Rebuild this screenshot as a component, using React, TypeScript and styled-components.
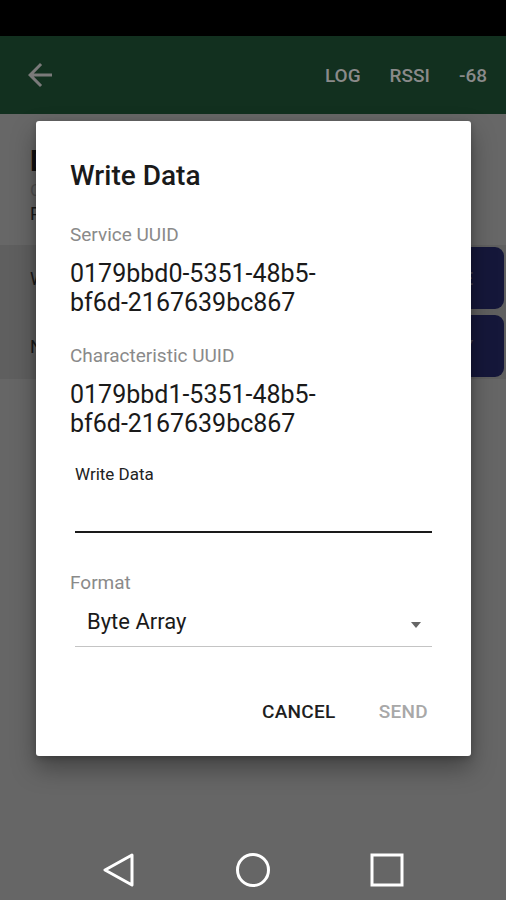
import React from "react";
import styled, { createGlobalStyle } from "styled-components";

const GlobalStyle = createGlobalStyle`
  html, body {
    margin: 0;
    padding: 0;
    background: #666666;
  }
  body {
    font-family: Roboto, "Noto Sans", "Liberation Sans", sans-serif;
  }
`;

const Phone = styled.div`
  width: 506px;
  height: 900px;
  display: flex;
  flex-direction: column;
  overflow: hidden;
`;

const StatusBar = styled.div`
  height: 36px;
  background: #000;
  flex-shrink: 0;
`;

const Screen = styled.div`
  position: relative;
  flex: 1;
  background: #666666;
  display: flex;
  flex-direction: column;
`;

const Toolbar = styled.div`
  height: 78px;
  background: #12301f;
  display: flex;
  align-items: center;
  padding: 0 19px 0 22px;
`;

const BackIcon = styled.svg`
  width: 36px;
  height: 36px;
  fill: #7a7a7a;
`;

const Actions = styled.div`
  margin-left: auto;
  display: flex;
  gap: 29px;
`;

const Action = styled.span`
  font-size: 19px;
  font-weight: 500;
  color: #8a8a8a;
`;

const Header = styled.div`
  height: 131px;
  padding: 30px 0 0 30px;
  box-sizing: border-box;
  background: #676767;
  overflow: hidden;
`;

const HeaderTitle = styled.div`
  font-size: 29px;
  font-weight: 700;
  line-height: 34px;
  color: #121212;
`;

const HeaderLine = styled.div<{ muted?: boolean }>`
  font-size: ${(p) => (p.muted ? "17px" : "18px")};
  line-height: 24px;
  color: ${(p) => (p.muted ? "#505050" : "#1a1a1a")};
`;

const Band = styled.div`
  background: #5f5f5f;
  padding: 2px 0;
  display: flex;
  flex-direction: column;
  gap: 6px;
`;

const Row = styled.div`
  height: 62px;
  display: flex;
  align-items: center;
  padding: 0 2px 0 30px;
`;

const RowLabel = styled.span`
  font-size: 18px;
  color: #1a1a1a;
`;

const RowButton = styled.div`
  margin-left: auto;
  width: 90px;
  height: 62px;
  border-radius: 9px;
  background: #15173a;
  color: #4a4a5a;
  font-size: 19px;
  font-weight: 500;
  display: flex;
  align-items: center;
  justify-content: flex-end;
  padding-right: 31px;
  box-sizing: border-box;
`;

const Dialog = styled.div`
  position: absolute;
  top: 85px;
  left: 36px;
  width: 435px;
  box-sizing: border-box;
  padding: 39px 39px 32px 34px;
  background: #fff;
  border-radius: 3px;
  box-shadow: 0 12px 24px rgba(0, 0, 0, 0.35), 0 2px 6px rgba(0, 0, 0, 0.2);
`;

const DialogTitle = styled.div`
  font-size: 28px;
  font-weight: 500;
  line-height: 32px;
  color: #1a1a1a;
`;

const Field = styled.div<{ first?: boolean }>`
  margin-top: ${(p) => (p.first ? "31px" : "27px")};
`;

const FieldLabel = styled.div`
  font-size: 19px;
  line-height: 24px;
  color: #8a8a8a;
`;

const FieldValue = styled.div`
  margin-top: 12px;
  font-size: 25px;
  line-height: 29px;
  color: #1a1a1a;
`;

const TextField = styled.div`
  margin: 26px 0 0 5px;
  border-bottom: 2px solid #1a1a1a;
  height: 67px;
`;

const TextFieldLabel = styled.div`
  font-size: 17px;
  line-height: 20px;
  color: #222;
`;

const FormatLabel = styled(FieldLabel)`
  margin-top: 38px;
`;

const Select = styled.div`
  margin: 13px 0 0 5px;
  padding: 0 11px 10px 12px;
  border-bottom: 1px solid #c4c4c4;
  display: flex;
  align-items: center;
`;

const SelectText = styled.span`
  font-size: 22px;
  line-height: 28px;
  color: #1a1a1a;
`;

const Caret = styled.span`
  margin-left: auto;
  margin-top: 6px;
  width: 0;
  height: 0;
  border-left: 5px solid transparent;
  border-right: 5px solid transparent;
  border-top: 6px solid #666;
`;

const ButtonRow = styled.div`
  margin-top: 53px;
  display: flex;
  justify-content: flex-end;
  gap: 43px;
  padding-right: 4px;
`;

const TextButton = styled.span<{ disabled?: boolean }>`
  font-size: 19px;
  font-weight: 500;
  line-height: 24px;
  letter-spacing: 0.3px;
  color: ${(p) => (p.disabled ? "#a8a8a8" : "#1e1e1e")};
`;

const NavBar = styled.div`
  height: 60px;
  flex-shrink: 0;
  background: #666666;
  display: flex;
  align-items: center;
  justify-content: center;
  gap: 100px;
`;

const NavIcon = styled.svg`
  width: 34px;
  height: 34px;
  fill: none;
  stroke: #fff;
  stroke-width: 3;
`;

export default function App() {
  return (
    <>
      <GlobalStyle />
      <Phone>
        <StatusBar />
        <Screen>
          <Toolbar>
            <BackIcon viewBox="0 0 24 24">
              <path d="M20 11H7.83l5.59-5.59L12 4l-8 8 8 8 1.41-1.41L7.83 13H20v-2z" />
            </BackIcon>
            <Actions>
              <Action>LOG</Action>
              <Action>RSSI</Action>
              <Action>-68</Action>
            </Actions>
          </Toolbar>
          <Header>
            <HeaderTitle>Device</HeaderTitle>
            <HeaderLine muted>Connected</HeaderLine>
            <HeaderLine>Properties</HeaderLine>
          </Header>
          <Band>
            <Row>
              <RowLabel>Write</RowLabel>
              <RowButton>WRITE</RowButton>
            </Row>
            <Row>
              <RowLabel>Notify</RowLabel>
              <RowButton>NOTIFY</RowButton>
            </Row>
          </Band>

          <Dialog>
            <DialogTitle>Write Data</DialogTitle>
            <Field first>
              <FieldLabel>Service UUID</FieldLabel>
              <FieldValue>
                0179bbd0-5351-48b5-
                <br />
                bf6d-2167639bc867
              </FieldValue>
            </Field>
            <Field>
              <FieldLabel>Characteristic UUID</FieldLabel>
              <FieldValue>
                0179bbd1-5351-48b5-
                <br />
                bf6d-2167639bc867
              </FieldValue>
            </Field>
            <TextField>
              <TextFieldLabel>Write Data</TextFieldLabel>
            </TextField>
            <FormatLabel>Format</FormatLabel>
            <Select>
              <SelectText>Byte Array</SelectText>
              <Caret />
            </Select>
            <ButtonRow>
              <TextButton>CANCEL</TextButton>
              <TextButton disabled>SEND</TextButton>
            </ButtonRow>
          </Dialog>
        </Screen>
        <NavBar>
          <NavIcon viewBox="0 0 34 34">
            <path d="M30 2 L3 17 L30 32 Z" strokeLinejoin="round" />
          </NavIcon>
          <NavIcon viewBox="0 0 34 34">
            <circle cx="17" cy="17" r="15.5" />
          </NavIcon>
          <NavIcon viewBox="0 0 34 34">
            <rect x="2" y="2" width="30" height="30" />
          </NavIcon>
        </NavBar>
      </Phone>
    </>
  );
}
